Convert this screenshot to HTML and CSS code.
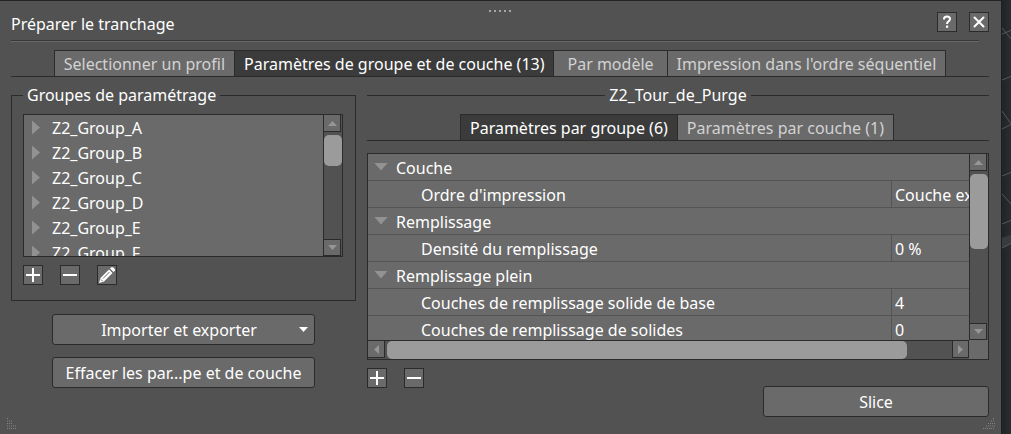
FILE: index.html
```html
<!DOCTYPE html>
<html lang="fr">
<head>
<meta charset="utf-8">
<meta name="viewport" content="width=device-width, initial-scale=1">
<title>Préparer le tranchage</title>
<link rel="stylesheet" href="styles.css">
</head>
<body>
<div class="app">
  <main class="dialog">
    <svg class="grip" width="23" height="2" viewBox="0 0 23 2" aria-hidden="true"><path d="M0 1h2M5 1h2M10 1h2M15 1h2M20 1h2" stroke="#a6a6a6" stroke-width="2"/></svg>
    <header class="titlebar">
      <h1 class="title">Préparer le tranchage</h1>
      <div class="window-buttons">
        <button class="icon-button" type="button" aria-label="Aide"><svg width="18" height="18" viewBox="0 0 18 18"><path d="M6 6.400V6Q6 3.500 9 3.500T12 6Q12 7.300 10.500 8.300Q9 9.300 9 11" fill="none" stroke="#fff" stroke-width="2"/><path d="M8 12.500h2.200v2.300H8z" fill="#fff"/></svg></button>
        <button class="icon-button" type="button" aria-label="Fermer"><svg width="18" height="18" viewBox="0 0 18 18"><path d="M4.500 4.500l9 9M13.500 4.500l-9 9" stroke="#fff" stroke-width="2" stroke-linecap="round"/></svg></button>
      </div>
    </header>
    <div class="divider"></div>
    <div class="tabs" role="tablist">
      <button class="tab" type="button" role="tab" aria-selected="false">Selectionner un profil</button>
      <button class="tab" type="button" role="tab" aria-selected="true">Paramètres de groupe et de couche (13)</button>
      <button class="tab tab-wide" type="button" role="tab" aria-selected="false">Par modèle</button>
      <button class="tab" type="button" role="tab" aria-selected="false">Impression dans l'ordre séquentiel</button>
    </div>

    <div class="columns">
      <section class="groups-column">
        <fieldset class="groups">
          <legend class="legend">Groupes de paramétrage</legend>
          <div class="list-box">
            <ul class="group-list">
              <li><button class="group" type="button"><span class="arrow arrow-right"></span>Z2_Group_A</button></li>
              <li><button class="group" type="button"><span class="arrow arrow-right"></span>Z2_Group_B</button></li>
              <li><button class="group" type="button"><span class="arrow arrow-right"></span>Z2_Group_C</button></li>
              <li><button class="group" type="button"><span class="arrow arrow-right"></span>Z2_Group_D</button></li>
              <li><button class="group" type="button"><span class="arrow arrow-right"></span>Z2_Group_E</button></li>
              <li><button class="group" type="button"><span class="arrow arrow-right"></span>Z2_Group_F</button></li>
            </ul>
            <div class="scroll-v">
              <button class="scroll-button up" type="button" aria-label="Défiler vers le haut"><svg width="9" height="5" viewBox="0 0 9 5"><path d="M0 5L4.500 0L9 5z"/></svg></button>
              <div class="track"><div class="thumb thumb-groups"></div></div>
              <button class="scroll-button down" type="button" aria-label="Défiler vers le bas"><svg width="9" height="5" viewBox="0 0 9 5"><path d="M0 0h9L4.500 5z"/></svg></button>
            </div>
          </div>
          <div class="actions">
            <button class="icon-button" type="button" aria-label="Ajouter un groupe"><svg width="18" height="18" viewBox="0 0 18 18"><path d="M2 9h14M9 2v14" stroke="#fff" stroke-width="2"/></svg></button>
            <button class="icon-button" type="button" aria-label="Supprimer le groupe"><svg width="18" height="18" viewBox="0 0 18 18"><path d="M2 9h14" stroke="#fff" stroke-width="2"/></svg></button>
            <button class="icon-button" type="button" aria-label="Modifier le groupe"><svg width="18" height="18" viewBox="0 0 18 18"><path d="M1 17L2.500 12L11 3.500L14.500 7L6 15.500z" fill="#fff"/><path d="M12 2.500L13.300 1.200H15L17 3.200V4.600L15.500 6z" fill="#fff"/><path d="M5 12.500L11.500 6M3 13.500L4.500 15" stroke="#6a6a6a" stroke-width="1"/></svg></button>
          </div>
        </fieldset>
        <div class="commands">
          <button class="command" type="button"><span class="command-label">Importer et exporter</span><svg width="9" height="5" viewBox="0 0 9 5" aria-hidden="true"><path d="M0 0h9L4.500 5z" fill="#fff"/></svg></button>
          <button class="command" type="button"><span class="command-label">Effacer les par...pe et de couche</span></button>
        </div>
      </section>

      <section class="settings-column">
        <h2 class="section-title">Z2_Tour_de_Purge</h2>
        <div class="tabs tabs-inner" role="tablist">
          <button class="tab" type="button" role="tab" aria-selected="true">Paramètres par groupe (6)</button>
          <button class="tab" type="button" role="tab" aria-selected="false">Paramètres par couche (1)</button>
        </div>
        <div class="tree-box">
          <div class="tree-view">
            <table class="tree">
              <colgroup><col class="col-name"><col class="col-value"></colgroup>
              <tbody>
                <tr><th class="category" colspan="2" scope="rowgroup"><span class="arrow arrow-down"></span>Couche</th></tr>
                <tr><th class="name" scope="row">Ordre d'impression</th><td class="value">Couche externe</td></tr>
                <tr><th class="category" colspan="2" scope="rowgroup"><span class="arrow arrow-down"></span>Remplissage</th></tr>
                <tr><th class="name" scope="row">Densité du remplissage</th><td class="value">0 %</td></tr>
                <tr><th class="category" colspan="2" scope="rowgroup"><span class="arrow arrow-down"></span>Remplissage plein</th></tr>
                <tr><th class="name" scope="row">Couches de remplissage solide de base</th><td class="value">4</td></tr>
                <tr><th class="name" scope="row">Couches de remplissage de solides</th><td class="value">0</td></tr>
              </tbody>
            </table>
          </div>
          <div class="scroll-v">
            <button class="scroll-button up" type="button" aria-label="Défiler vers le haut"><svg width="9" height="5" viewBox="0 0 9 5"><path d="M0 5L4.500 0L9 5z"/></svg></button>
            <div class="track"><div class="thumb thumb-tree"></div></div>
            <button class="scroll-button down" type="button" aria-label="Défiler vers le bas"><svg width="9" height="5" viewBox="0 0 9 5"><path d="M0 0h9L4.500 5z"/></svg></button>
          </div>
          <div class="scroll-h">
            <button class="scroll-button left" type="button" aria-label="Défiler vers la gauche"><svg width="5" height="9" viewBox="0 0 5 9"><path d="M5 0v9L0 4.500z"/></svg></button>
            <div class="track-h"><div class="thumb-h"></div></div>
            <button class="scroll-button right" type="button" aria-label="Défiler vers la droite"><svg width="5" height="9" viewBox="0 0 5 9"><path d="M0 0v9L5 4.500z"/></svg></button>
          </div>
        </div>
        <div class="footer">
          <div class="actions">
            <button class="icon-button" type="button" aria-label="Ajouter un paramètre"><svg width="18" height="18" viewBox="0 0 18 18"><path d="M2 9h14M9 2v14" stroke="#fff" stroke-width="2"/></svg></button>
            <button class="icon-button" type="button" aria-label="Supprimer le paramètre"><svg width="18" height="18" viewBox="0 0 18 18"><path d="M2 9h14" stroke="#fff" stroke-width="2"/></svg></button>
          </div>
          <button class="command slice" type="button"><span class="command-label">Slice</span></button>
        </div>
      </section>
    </div>
    <svg class="resize resize-left" width="12" height="12" viewBox="0 0 12 12" aria-hidden="true"><path d="M0 .5h2M0 3h5M0 5.500h5M0 8h9M0 10.500h9" stroke="#858585" stroke-dasharray="1 1"/></svg>
    <svg class="resize resize-right" width="12" height="12" viewBox="0 0 12 12" aria-hidden="true"><path d="M10 .5h2M8 3h4M5 5.500h7M3 8h9M0 10.500h12" stroke="#858585" stroke-dasharray="1 1"/></svg>
  </main>
  <div class="viewport">
    <svg width="9" height="434" viewBox="0 0 9 434" aria-hidden="true"><path d="M0 28L10 40M0 34L10 30M0 80L10 76M0 111L10 125M0 129L10 124M0 176L10 172M0 194L10 205M0 224L10 220" fill="none" stroke="#55585a"/><path d="M0 238L10 234V243L0 248z" fill="#373b3d"/><path d="M0 248L10 243" stroke="#55585a"/></svg>
  </div>
</div>
</body>
</html>
```
FILE: styles.css
```css
* { box-sizing: border-box; }

body {
  margin: 0;
  background: #24282b;
  color: #fff;
  font: 16px/24px "Noto Sans", "Open Sans", sans-serif;
}

button {
  margin: 0;
  padding: 0;
  border: 0;
  background: none;
  color: inherit;
  font: inherit;
}

svg { display: block; }

.app { display: flex; min-height: 100vh; overflow: hidden; }

.dialog {
  position: relative;
  flex: 1;
  min-width: 0;
  padding: 9px 12px 16px 11px;
  background: #525252;
  border-top: 1px solid #232323;
  border-right: 1px solid #1c1e1f;
}

.viewport { flex: none; width: 9px; background: linear-gradient(90deg, #202427, #2b2c2d); }

.grip { margin: 0 auto; }

.titlebar { display: flex; justify-content: space-between; height: 28px; }
.title { margin: 0; font-size: 16px; font-weight: 400; }
.window-buttons { display: flex; gap: 12px; }

.icon-button {
  width: 20px;
  height: 20px;
  border: 1px solid #2b2b2b;
  background: #6a6a6a;
}

.divider {
  height: 2px;
  margin-right: 10px;
  border-top: 1px solid #373737;
  border-bottom: 1px solid #6a6a6a;
}

.tabs {
  display: flex;
  justify-content: center;
  margin-top: 8px;
  border-bottom: 1px solid #2b2b2b;
}

.tab {
  height: 26px;
  padding: 0 9px;
  border: 1px solid #2b2b2b;
  border-bottom: 0;
  background: #6a6a6a;
  color: #d2d2d2;
  white-space: nowrap;
}
.tab + .tab { border-left: 0; }
.tab-wide { padding: 0 13px; }
.tab[aria-selected="true"] { background: #3b3b3b; color: #fff; }

.columns {
  display: grid;
  grid-template-columns: 345px minmax(0, 1fr);
  gap: 11px;
  margin-top: 6px;
}

.groups {
  min-width: 0;
  margin: 0;
  padding: 7px 12px 15px 11px;
  border: 1px solid #2b2b2b;
}
.legend { padding: 0 4px; }

.list-box {
  display: grid;
  grid-template-columns: minmax(0, 1fr) 19px;
  height: 143px;
  border: 1px solid #2b2b2b;
  background: #6a6a6a;
}
.group-list { margin: 0; padding: 0; overflow: hidden; list-style: none; }
.group {
  display: flex;
  align-items: center;
  gap: 12px;
  width: 100%;
  height: 25px;
  padding-left: 8px;
}

.arrow { flex: none; display: inline-block; background: #929292; }
.arrow-right { width: 8px; height: 14px; clip-path: polygon(0 0, 100% 50%, 0 100%); }
.arrow-down { width: 14px; height: 8px; clip-path: polygon(0 0, 100% 0, 50% 100%); }

.scroll-v {
  display: flex;
  flex-direction: column;
  min-height: 0;
  border-left: 1px solid #2b2b2b;
  background: #525252;
}
.scroll-button {
  flex: none;
  display: flex;
  align-items: center;
  justify-content: center;
  width: 17px;
  height: 17px;
  background: #6a6a6a;
  border: 0 solid #2b2b2b;
  fill: #969696;
}
.up { border-width: 0 1px 1px 0; }
.down { border-width: 1px 1px 1px 0; }
.left { border-width: 0 1px 1px 0; }
.right { border-width: 0 1px 1px; }

.track { flex: 1; padding-top: 3px; }
.thumb { border-radius: 5px; background: #9b9b9b; }
.thumb-groups { height: 31px; }
.thumb-tree { height: 75px; }

.actions { display: flex; gap: 17px; }
.groups .actions { margin-top: 8px; }

.commands { display: grid; gap: 12px; margin: 13px 41px 0; }
.command {
  display: flex;
  align-items: center;
  height: 31px;
  padding: 0 6px;
  border: 1px solid #2b2b2b;
  border-radius: 3px;
  background: #6a6a6a;
  white-space: nowrap;
}
.command-label { flex: 1; text-align: center; }

.section-title {
  display: flex;
  align-items: center;
  gap: 4px;
  margin: 0;
  font-size: 16px;
  font-weight: 400;
}
.section-title::before,
.section-title::after { content: ""; flex: 1; height: 1px; background: #2b2b2b; }

.tabs-inner { margin-top: 7px; padding-right: 2px; }

.tree-box {
  display: grid;
  grid-template: 186px 19px / minmax(0, 1fr) 19px;
  margin-top: 12px;
  border: 1px solid #2b2b2b;
  background: #6a6a6a;
}
.tree-view { overflow: hidden; }

.tree { width: 654px; table-layout: fixed; border-collapse: separate; border-spacing: 0; }
.col-name { width: 524px; }
.tree th,
.tree td {
  height: 27px;
  padding: 1px 0 0;
  border-bottom: 1px solid #545454;
  font-weight: 400;
  text-align: left;
  white-space: nowrap;
}
.tree .category { padding-left: 6px; }
.category .arrow { margin: 0 8px 3px 0; }
.tree .name { padding-left: 53px; border-right: 1px solid #545454; }
.tree .value { padding-left: 3px; }

.scroll-h {
  display: flex;
  border-top: 1px solid #2b2b2b;
  background: #525252;
}
.track-h { flex: 1; padding-left: 2px; }
.thumb-h { width: 92%; height: 18px; border-radius: 5px; background: #9b9b9b; }

.footer { display: flex; justify-content: space-between; margin-top: 8px; }
.slice { width: 226px; margin-top: 18px; }

.resize { position: absolute; bottom: 4px; }
.resize-left { left: 7px; }
.resize-right { right: 6px; }
```
